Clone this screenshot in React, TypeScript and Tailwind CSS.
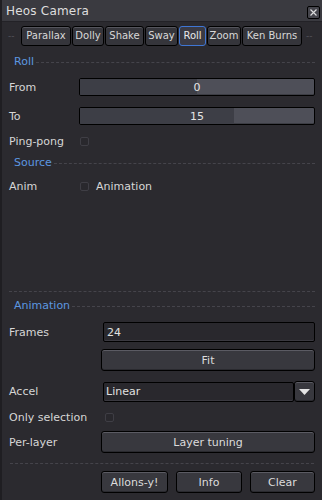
import React from 'react';

const tabs: [string, number][] = [
  ['Parallax', 50],
  ['Dolly', 32],
  ['Shake', 39],
  ['Sway', 33],
  ['Roll', 27],
  ['Zoom', 34],
  ['Ken Burns', 60],
];

const btn =
  'flex items-center justify-center rounded-[3px] border border-black bg-[#38383e] shadow-[inset_0_1px_0_#5b5b63,inset_0_-1px_0_#2a2a2f] text-[#dcdcdc]';

const Section: React.FC<{ title: string; className?: string }> = ({ title, className = '' }) => (
  <div className={`flex items-center h-[14px] pl-[5px] ${className}`}>
    <span className="text-[#5c97e0]">{title}</span>
    <div className="flex-1 ml-[2px] mt-[2px] border-t border-dashed border-[#45444b]" />
  </div>
);

const Checkbox: React.FC = () => (
  <div className="w-[9px] h-[9px] rounded-[2px] border border-[#3f3e45] bg-[#29282d]" />
);

const Slider: React.FC<{ value: number; fill: number }> = ({ value, fill }) => (
  <div className="relative flex-1 h-[18px] rounded-[2px] border border-black bg-[#4e4f58] overflow-hidden shadow-[inset_0_-1px_0_#3c3d44]">
    <div className="absolute left-0 top-0 bottom-0 bg-[#3d3e46]" style={{ width: `${fill}%` }} />
    <div className="relative h-full flex items-center justify-center text-[#e4e4e4]">{value}</div>
  </div>
);

export default function App() {
  return (
    <div
      className="w-[322px] h-[500px] bg-[#2b2a2f] text-[#d6d6d6] text-[11px] leading-none flex flex-col border-l-2 border-[#1f1e22]"
      style={{ fontFamily: '"DejaVu Sans", sans-serif' }}
    >
      {/* Title bar */}
      <div className="h-[22px] bg-[#3a3a40] flex items-center justify-between pl-[4px] pr-[2px] border-b border-[#232227]">
        <span className="text-[12px] text-[#dedede] tracking-[0.2px]">Heos Camera</span>
        <div className="w-[13px] h-[13px] mt-[3px] rounded-[2px] border border-black bg-[#45454c] flex items-center justify-center">
          <svg width="7" height="7" viewBox="0 0 7 7">
            <path d="M0.5 0.5 L6.5 6.5 M6.5 0.5 L0.5 6.5" stroke="#dcdcdc" strokeWidth="1.2" />
          </svg>
        </div>
      </div>

      {/* Tabs */}
      <div className="flex items-center mt-[4px] pl-[6px] h-[20px]">
        <span className="w-[13px] text-[#55545b] text-[9px]">--</span>
        <div className="flex gap-[1px]">
          {tabs.map(([t, w]) => (
            <div
              key={t}
              style={{ width: w }}
              className={`h-[20px] flex items-center justify-center whitespace-nowrap rounded-[3px] border text-[10px] ${
                t === 'Roll'
                  ? 'border-[#3f76d4] bg-[#3a3a44] text-[#e8e8e8]'
                  : 'border-black bg-[#35353b] text-[#d8d8d8] shadow-[inset_0_1px_0_#55555d]'
              }`}
            >
              {t}
            </div>
          ))}
        </div>
        <span className="ml-[4px] text-[#55545b] text-[9px]">--</span>
      </div>

      <div className="flex flex-col px-[7px] mt-[8px]">
        <Section title="Roll" />

        <div className="flex items-center h-[18px] mt-[10px]">
          <span className="w-[70px]">From</span>
          <Slider value={0} fill={50} />
        </div>
        <div className="flex items-center h-[18px] mt-[11px]">
          <span className="w-[70px]">To</span>
          <Slider value={15} fill={66} />
        </div>
        <div className="flex items-center h-[14px] mt-[9px]">
          <span className="w-[71px]">Ping-pong</span>
          <Checkbox />
        </div>

        <Section title="Source" className="mt-[7px]" />
        <div className="flex items-center h-[14px] mt-[10px]">
          <span className="w-[71px]">Anim</span>
          <Checkbox />
          <span className="ml-[7px]">Animation</span>
        </div>

        <div className="mt-[98px] border-t border-dashed border-[#45444b]" />
        <Section title="Animation" className="mt-[6px]" />

        <div className="flex items-center h-[20px] mt-[10px]">
          <span className="w-[94px]">Frames</span>
          <div className="flex-1 h-[20px] rounded-[2px] border border-black bg-[#29282d] flex items-center px-[3px] text-[#e0e0e0] shadow-[inset_0_-1px_0_#3a3940]">
            24
          </div>
        </div>
        <div className="flex items-center h-[22px] mt-[7px]">
          <span className="w-[92px]" />
          <div className={`flex-1 h-[22px] ${btn}`}>Fit</div>
        </div>
        <div className="flex items-center h-[21px] mt-[10px]">
          <span className="w-[94px]">Accel</span>
          <div className="flex-1 h-[20px] rounded-[2px] border border-black bg-[#29282d] flex items-center px-[2px] text-[#e0e0e0] shadow-[inset_0_-1px_0_#3a3940]">
            Linear
          </div>
          <div className={`w-[21px] h-[21px] ${btn}`}>
            <svg width="11" height="6" viewBox="0 0 11 6">
              <path d="M0 0 H11 L5.5 6 Z" fill="#e6e6e6" />
            </svg>
          </div>
        </div>
        <div className="flex items-center h-[14px] mt-[8px]">
          <span className="w-[96px]">Only selection</span>
          <Checkbox />
        </div>
        <div className="flex items-center h-[22px] mt-[7px]">
          <span className="w-[92px]">Per-layer</span>
          <div className={`flex-1 h-[22px] ${btn}`}>Layer tuning</div>
        </div>

        <div className="mt-[10px] mx-[1px] border-t border-dashed border-[#45444b]" />

        <div className="flex items-center h-[22px] mt-[7px] pl-[92px] gap-[8px]">
          <div className={`w-[67px] h-[22px] ${btn}`}>Allons-y!</div>
          <div className={`w-[66px] h-[22px] ${btn}`}>Info</div>
          <div className={`flex-1 h-[22px] ${btn}`}>Clear</div>
        </div>
      </div>
    </div>
  );
}
